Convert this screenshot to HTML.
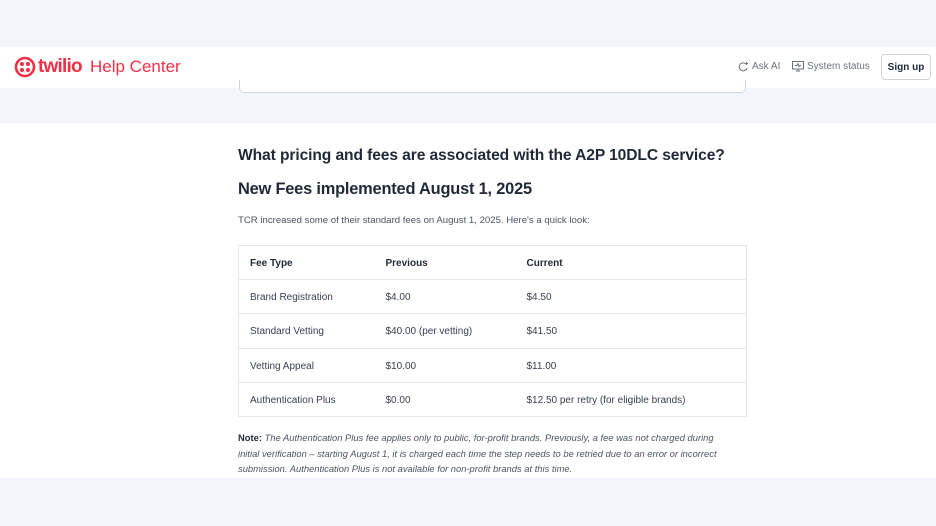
<!DOCTYPE html>
<html><head><meta charset="utf-8"><style>
*{margin:0;padding:0;box-sizing:border-box}
body{width:936px;height:526px;background:#f2f6fc;font-family:"Liberation Sans",sans-serif;position:relative;overflow:hidden;color:#1f2937}
.hdr{position:absolute;left:0;top:47px;width:936px;height:41px;background:#fff}
.band{position:absolute;left:0;top:88px;width:936px;height:35px;background:#f2f6fc}
.search{position:absolute;left:239px;top:80px;width:507px;height:13px;background:#fff;border:1px solid #cfd5de;border-top:none;border-radius:0 0 5px 5px}
.main{position:absolute;left:0;top:123px;width:936px;height:355px;background:#fff}
.abs{position:absolute;white-space:nowrap}
h1{position:absolute;left:238px;top:147px;font-size:15.6px;font-weight:bold;color:#1f2937;letter-spacing:-0.1px}
h2{position:absolute;left:238px;top:180px;font-size:16.4px;font-weight:bold;color:#1f2937;letter-spacing:-0.2px}
.p{position:absolute;left:238px;top:215px;font-size:9.6px;color:#4b5563}
table{position:absolute;left:238px;top:245px;width:509px;border-collapse:collapse;font-size:10px;color:#374151}
td{border-top:1px solid #e5e7eb;border-bottom:1px solid #e5e7eb;height:34.3px;padding-left:11px;padding-top:2px}
table{border:1px solid #e5e7eb}
th{height:34px;text-align:left;padding-left:11px;padding-top:2px;font-weight:bold;color:#1f2937}
.note{position:absolute;left:238px;top:430px;width:495px;font-size:9.4px;line-height:15.5px;color:#4b5563;font-style:italic}
.note b{font-style:normal;color:#1f2937}
.btn{position:absolute;left:881px;top:54px;width:50px;height:26px;border:1px solid #d1d5db;border-radius:4px;font-size:10px;font-weight:bold;text-align:center;line-height:25px;color:#1f2937}
</style></head><body>
<div class="hdr"></div>
<div class="band"></div>
<div class="search"></div>
<div class="main"></div>
<svg class="abs" style="left:14px;top:56px" width="22" height="22" viewBox="0 0 22 22"><circle cx="11" cy="11" r="9" fill="none" stroke="#f22f46" stroke-width="2.6"/><circle cx="8" cy="8" r="2" fill="#f22f46"/><circle cx="14" cy="8" r="2" fill="#f22f46"/><circle cx="8" cy="14" r="2" fill="#f22f46"/><circle cx="14" cy="14" r="2" fill="#f22f46"/></svg>
<div class="abs" style="left:38px;top:56px;font-size:19px;font-weight:bold;color:#f22f46;letter-spacing:-0.8px">twilio</div>
<div class="abs" style="left:90px;top:57px;font-size:17px;color:#f22f46">Help Center</div>
<svg class="abs" style="left:738px;top:61px" width="11" height="11" viewBox="0 0 11 11"><path d="M8 3A4 4 0 1 0 9 7" fill="none" stroke="#6b7280" stroke-width="1"/><path d="M8.5 1v3M7 2.5h3" stroke="#6b7280" stroke-width="0.9"/></svg>
<div class="abs" style="left:752px;top:60px;font-size:10px;line-height:13px;color:#6b7280">Ask AI</div>
<svg class="abs" style="left:792px;top:61px" width="12" height="11" viewBox="0 0 12 11"><rect x="0.5" y="0.5" width="11" height="7.5" fill="none" stroke="#6b7280"/><path d="M3 4.5h2l1-2 1 3 1-1h1M4 10h4M6 8v2" fill="none" stroke="#6b7280" stroke-width="0.9"/></svg>
<div class="abs" style="left:807px;top:60px;font-size:10px;line-height:13px;color:#6b7280">System status</div>
<div class="btn">Sign up</div>
<h1>What pricing and fees are associated with the A2P 10DLC service?</h1>
<h2>New Fees implemented August 1, 2025</h2>
<div class="p">TCR increased some of their standard fees on August 1, 2025. Here's a quick look:</div>
<table>
<tr><th style="width:136px">Fee Type</th><th style="width:141px">Previous</th><th>Current</th></tr>
<tr><td>Brand Registration</td><td>$4.00</td><td>$4.50</td></tr>
<tr><td>Standard Vetting</td><td>$40.00 (per vetting)</td><td>$41.50</td></tr>
<tr><td>Vetting Appeal</td><td>$10.00</td><td>$11.00</td></tr>
<tr><td>Authentication Plus</td><td>$0.00</td><td>$12.50 per retry (for eligible brands)</td></tr>
</table>
<div class="note"><b>Note:</b> The Authentication Plus fee applies only to public, for-profit brands. Previously, a fee was not charged during initial verification – starting August 1, it is charged each time the step needs to be retried due to an error or incorrect submission. Authentication Plus is not available for non-profit brands at this time.</div>
</body></html>
